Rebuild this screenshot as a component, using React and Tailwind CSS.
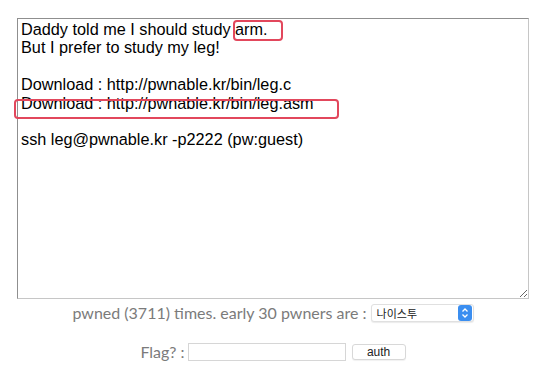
import { useState } from "react";

const CHALLENGE_TEXT = `Daddy told me I should study arm.
But I prefer to study my leg!

Download : http://pwnable.kr/bin/leg.c
Download : http://pwnable.kr/bin/leg.asm

ssh leg@pwnable.kr -p2222 (pw:guest)`;

function Stepper() {
  return (
    <span className="flex h-[16px] w-[14px] items-center justify-center rounded-[3px] bg-[#3b8ef0]">
      <svg width="8" height="12" viewBox="0 0 8 12" fill="none">
        <path d="M1.5 4.5 L4 2 L6.5 4.5" stroke="white" strokeWidth="1.3" />
        <path d="M1.5 7.5 L4 10 L6.5 7.5" stroke="white" strokeWidth="1.3" />
      </svg>
    </span>
  );
}

export default function App() {
  const [flag, setFlag] = useState("");

  return (
    <div className="min-h-[371px] w-[554px] bg-white pl-[17px] pt-[18px]">
      <div className="relative w-[512px]">
        <textarea
          readOnly
          defaultValue={CHALLENGE_TEXT}
          className="block h-[281px] w-[512px] resize border border-[#8f8f8f] border-b-[#c6c6c6] border-r-[#c6c6c6] bg-white px-[3px] py-[1px] text-[16.25px] leading-[18.4px] text-black outline-none"
          style={{ fontFamily: '"Liberation Sans", Arial, sans-serif' }}
        />
        {/* annotation boxes */}
        <div className="pointer-events-none absolute left-[216px] top-[2px] h-[21px] w-[50px] rounded-[4px] border-[2.5px] border-[#e2475c]" />
        <div className="pointer-events-none absolute left-[-3px] top-[81px] h-[20px] w-[325px] rounded-[4px] border-[2.5px] border-[#e2475c]" />

        <div
          className="mt-[5px] flex h-[18px] items-center justify-center text-[16px] text-[#7b7b7b]"
          style={{ fontFamily: "Lato, sans-serif" }}
        >
          <span>pwned (3711) times. early 30 pwners are :</span>
          <div className="ml-[4px] flex h-[18px] w-[103px] items-center justify-between rounded-[3px] border border-[#e0e0e0] bg-white pl-[5px] pr-[1px] shadow-[0_1px_1px_rgba(0,0,0,0.08)]">
            <span
              className="text-[11px] text-[#222]"
              style={{ fontFamily: '"Noto Sans CJK KR", sans-serif' }}
            >
              나이스투
            </span>
            <Stepper />
          </div>
        </div>

        <div
          className="mt-[21px] flex h-[18px] items-center justify-center text-[16px] text-[#7b7b7b]"
          style={{ fontFamily: "Lato, sans-serif" }}
        >
          <span>Flag? :</span>
          <input
            value={flag}
            onChange={(e) => setFlag(e.target.value)}
            className="ml-[3px] h-[18px] w-[158px] border border-[#d6d6d6] bg-white px-1 text-[12px] outline-none"
          />
          <button
            className="ml-[6px] h-[16px] w-[54px] rounded-[3px] border border-[#d8d8d8] bg-white text-[12px] leading-none text-[#222] shadow-[0_1px_1px_rgba(0,0,0,0.06)]"
            style={{ fontFamily: '"Liberation Sans", Arial, sans-serif' }}
          >
            auth
          </button>
        </div>
      </div>
    </div>
  );
}
